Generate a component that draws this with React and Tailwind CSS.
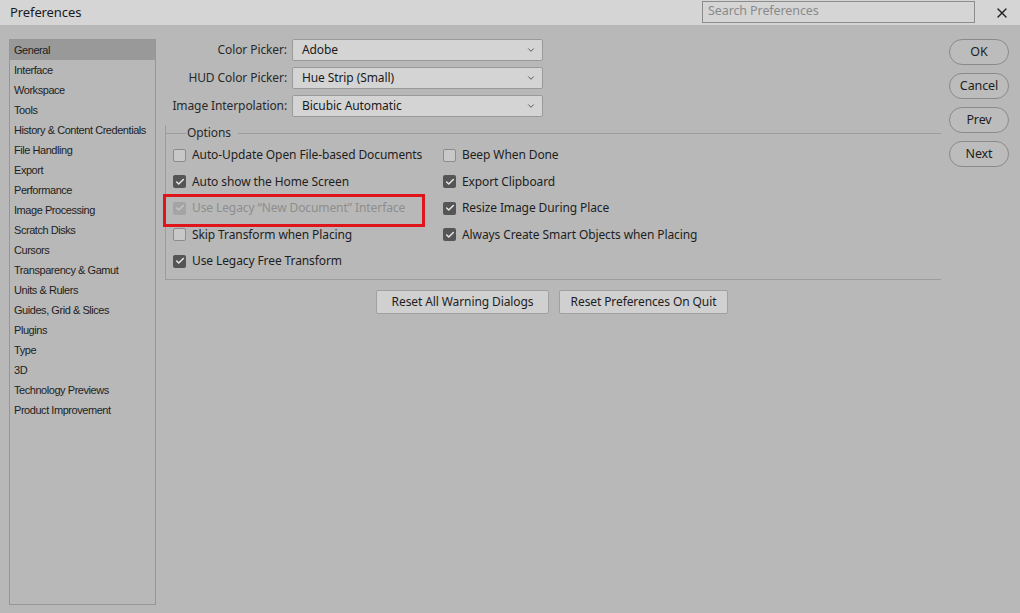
import { X, ChevronDown, Check } from 'lucide-react';

const sections = [
  'General', 'Interface', 'Workspace', 'Tools', 'History & Content Credentials',
  'File Handling', 'Export', 'Performance', 'Image Processing', 'Scratch Disks',
  'Cursors', 'Transparency & Gamut', 'Units & Rulers', 'Guides, Grid & Slices',
  'Plugins', 'Type', '3D', 'Technology Previews', 'Product Improvement',
];

const pickers = [
  { label: 'Color Picker:', value: 'Adobe' },
  { label: 'HUD Color Picker:', value: 'Hue Strip (Small)' },
  { label: 'Image Interpolation:', value: 'Bicubic Automatic' },
];

const leftOptions = [
  { text: 'Auto-Update Open File-based Documents', checked: false },
  { text: 'Auto show the Home Screen', checked: true },
  { text: 'Use Legacy \u201cNew Document\u201d Interface', checked: true, disabled: true },
  { text: 'Skip Transform when Placing', checked: false },
  { text: 'Use Legacy Free Transform', checked: true },
];

const rightOptions = [
  { text: 'Beep When Done', checked: false },
  { text: 'Export Clipboard', checked: true },
  { text: 'Resize Image During Place', checked: true },
  { text: 'Always Create Smart Objects when Placing', checked: true },
];

const Checkbox = ({ checked, disabled }) => (
  <div
    className={`w-[13px] h-[13px] rounded-[2px] flex items-center justify-center shrink-0 ${
      checked
        ? disabled ? 'bg-[#a4a4a4]' : 'bg-[#555555]'
        : 'bg-[#c8c8c8] border border-[#8c8c8c]'
    }`}
  >
    {checked && <Check className={`w-[10px] h-[10px] ${disabled ? 'text-[#c4c4c4]' : 'text-[#e8e8e8]'}`} strokeWidth={3.5} />}
  </div>
);

const OptionRow = ({ option, highlighted }) => (
  <div className={`flex items-center gap-[6px] h-[26.5px] ${highlighted ? 'relative' : ''}`}>
    <Checkbox checked={option.checked} disabled={option.disabled} />
    <span className={option.disabled ? 'text-[#8e8e8e]' : 'text-[#1e1e1e]'}>{option.text}</span>
    {highlighted && (
      <div className="absolute left-[-10px] top-[-1px] w-[262px] h-[33px] border-[3px] border-[#e0151b]" />
    )}
  </div>
);

const PillButton = ({ children }) => (
  <button className="w-[60px] h-[26px] rounded-full border border-[#8a8a8a] bg-[#bcbcbc] text-[12.5px] text-[#1e1e1e]">
    {children}
  </button>
);

const App = () => {
  return (
    <div
      className="w-[1020px] h-[613px] flex flex-col bg-[#b8b8b8] text-[12px] text-[#1e1e1e] overflow-hidden"
      style={{ fontFamily: '"Noto Sans", "Open Sans", sans-serif', letterSpacing: '-0.1px' }}
    >
      {/* Title bar */}
      <div className="h-[25px] shrink-0 bg-[#d5d5d5] flex items-center pl-[10px] pr-[10px]">
        <span className="text-[13px] text-[#1a1a1a] flex-1">Preferences</span>
        <div className="w-[273px] h-[22px] mb-[2px] border border-[#8c8c8c] bg-[#d5d5d5] flex items-center px-[5px] text-[#8a8a8a] text-[12.5px]">
          Search Preferences
        </div>
        <X className="w-[16px] h-[16px] ml-[19px] text-[#222]" strokeWidth={2} />
      </div>

      {/* Body */}
      <div className="flex-1 flex pt-[14px] pb-[8px]">
        {/* Sidebar */}
        <div
          className="ml-[9px] w-[147px] border border-[#969696] text-[11px] text-[#1e1e1e]"
          style={{ fontFamily: '"Liberation Sans", Arial, sans-serif', letterSpacing: '-0.45px' }}
        >
          {sections.map((s, i) => (
            <div
              key={s}
              className={`h-[20px] flex items-center pl-[4px] whitespace-nowrap ${i === 0 ? 'bg-[#999999]' : ''}`}
            >
              {s}
            </div>
          ))}
        </div>

        {/* Main panel */}
        <div className="flex-1 flex flex-col pl-[9px]">
          <div className="flex flex-col gap-[6px] pl-[6px]">
            {pickers.map((p) => (
              <div key={p.label} className="flex items-center h-[22px]">
                <span className="w-[121px] text-right pr-[5px] text-[#2a2a2a] whitespace-nowrap">{p.label}</span>
                <div className="w-[251px] h-[22px] rounded-[2px] border border-[#9a9a9a] bg-[#d4d4d4] flex items-center pl-[9px] pr-[6px]">
                  <span className="flex-1 text-[#1a1a1a]">{p.value}</span>
                  <ChevronDown className="w-[10px] h-[10px] text-[#444]" strokeWidth={2} />
                </div>
              </div>
            ))}
          </div>

          {/* Options group */}
          <div className="mt-[8px] w-[776px] relative border-b border-l border-[#9c9c9c] pt-[14px] pb-[4px]">
            <div className="absolute top-[0px] left-0 right-0 flex items-center">
              <div className="w-[20px] border-t border-[#9c9c9c]" />
              <span className="px-[1px] -mt-[1px] text-[#2a2a2a]">Options</span>
              <div className="flex-1 ml-[6px] border-t border-[#9c9c9c]" />
            </div>
            <div className="flex pl-[7px] pt-[3px]">
              <div className="w-[270px] flex flex-col">
                {leftOptions.map((o) => (
                  <OptionRow key={o.text} option={o} highlighted={o.disabled} />
                ))}
              </div>
              <div className="flex flex-col">
                {rightOptions.map((o) => (
                  <OptionRow key={o.text} option={o} />
                ))}
              </div>
            </div>
          </div>

          <div className="flex gap-[10px] pl-[211px] mt-[10px]">
            <button className="w-[173px] h-[24px] rounded-[2px] border border-[#a0a0a0] bg-[#d0d0d0] text-[#1e1e1e]">
              Reset All Warning Dialogs
            </button>
            <button className="w-[169px] h-[24px] rounded-[2px] border border-[#a0a0a0] bg-[#d0d0d0] text-[#1e1e1e]">
              Reset Preferences On Quit
            </button>
          </div>
        </div>

        {/* Right buttons */}
        <div className="w-[71px] flex flex-col gap-[8px]">
          <PillButton>OK</PillButton>
          <PillButton>Cancel</PillButton>
          <PillButton>Prev</PillButton>
          <PillButton>Next</PillButton>
        </div>
      </div>
    </div>
  );
};

export default App;
